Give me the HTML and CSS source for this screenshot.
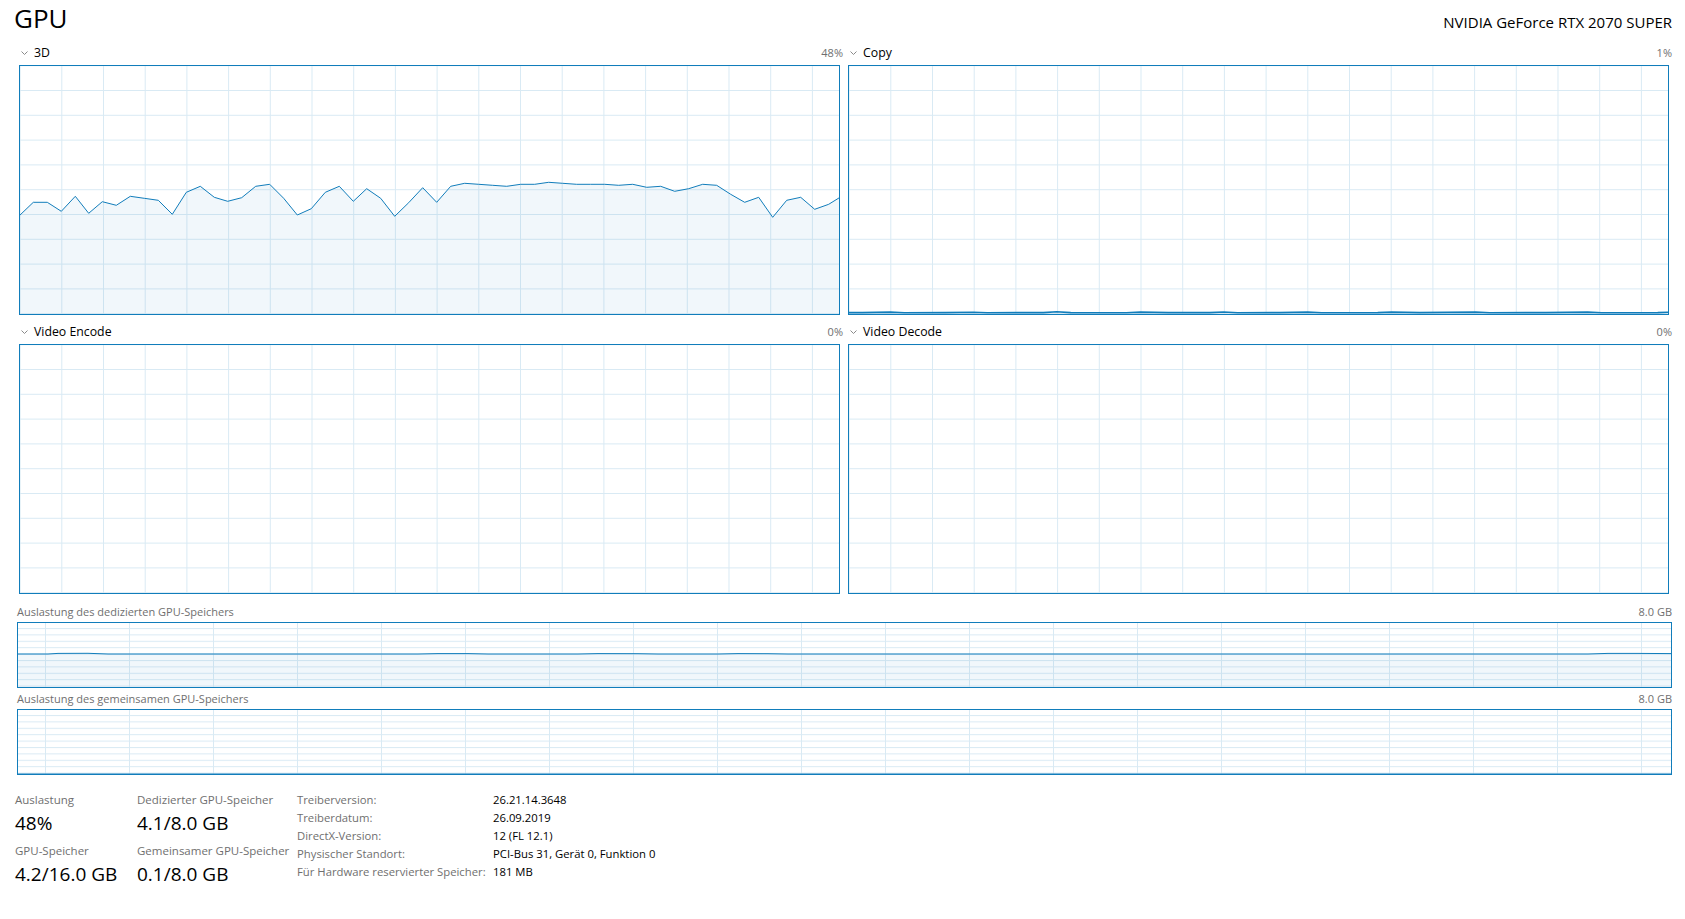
FILE: index.html
```html
<!DOCTYPE html>
<html>
<head>
  <title>GPU</title>
  <link rel="stylesheet" href="styles.css">
</head>
<body>
    <svg class="defs" width="0" height="0">
        <defs>
            <pattern id="grid-engine" patternUnits="userSpaceOnUse" x="41.3" y="24" width="41.7" height="24.8">
                <rect x="0" y="0" width="1" height="24.8" fill="#d9eaf4"/>
                <rect x="0" y="0" width="41.7" height="1" fill="#d9eaf4"/>
            </pattern>
            <pattern id="grid-mem" patternUnits="userSpaceOnUse" x="27" y="5" width="84" height="6.4">
                <rect x="0" y="0" width="1" height="6.4" fill="#d9eaf4"/>
                <rect x="0" y="0" width="84" height="1" fill="#d9eaf4"/>
            </pattern>
        </defs>
    </svg>

    <div class="page">
        <header class="title-bar">
            <h1 class="title">GPU</h1>
            <div class="model">NVIDIA GeForce RTX 2070 SUPER</div>
        </header>

        <div class="engines">
            <section class="engine">
                <div class="engine-head">
                    <svg class="chevron" viewBox="0 0 7 4"><polyline points="0.5,0.5 3.5,3.5 6.5,0.5"/></svg>
                    <span class="engine-name">3D</span>
                    <span class="engine-pct">48%</span>
                </div>
                <div class="graph">
                    <svg viewBox="0 0 819 248" preserveAspectRatio="none">
                        <rect width="819" height="248" fill="url(#grid-engine)"/>
                        <polygon class="area" points="-1,150 13.3,136.3 27.3,136.3 41.3,145.3 55.3,130.3 68.7,147.3 82.3,135.7 96.3,139.3 110.3,130.3 124.3,132.3 138.3,134.3 152.3,148.3 166.3,126.3 180.3,120.3 194.3,131.3 207.7,135.3 221.7,131.7 235.7,120.3 249.7,118.3 263.7,132.3 277.3,149 291.3,142.7 305.3,126.3 319.3,120.3 333.3,135.3 346.7,122.7 360.7,132.3 374.7,150.3 388.7,136.7 402.7,121.7 416.7,136.3 430.7,120.3 444.7,117.3 458.7,118.3 472.7,119.3 486.7,120.3 500.7,118.3 514.7,118.3 528.7,116.3 542.7,117.3 556.7,118.3 570.7,118.3 584.7,118.3 598.7,119.3 612.7,118.3 626.7,121.3 640.7,120.3 654.7,125.3 668.7,122.7 682.7,118.3 696.7,119.3 710.7,128.3 724.7,136.3 738.7,131.3 752.7,151.3 766.7,134.3 780.7,131.3 794.7,143.3 808.7,138.3 820,131.3 820,249 -1,249"/>
                        <polyline class="line" points="-1,150 13.3,136.3 27.3,136.3 41.3,145.3 55.3,130.3 68.7,147.3 82.3,135.7 96.3,139.3 110.3,130.3 124.3,132.3 138.3,134.3 152.3,148.3 166.3,126.3 180.3,120.3 194.3,131.3 207.7,135.3 221.7,131.7 235.7,120.3 249.7,118.3 263.7,132.3 277.3,149 291.3,142.7 305.3,126.3 319.3,120.3 333.3,135.3 346.7,122.7 360.7,132.3 374.7,150.3 388.7,136.7 402.7,121.7 416.7,136.3 430.7,120.3 444.7,117.3 458.7,118.3 472.7,119.3 486.7,120.3 500.7,118.3 514.7,118.3 528.7,116.3 542.7,117.3 556.7,118.3 570.7,118.3 584.7,118.3 598.7,119.3 612.7,118.3 626.7,121.3 640.7,120.3 654.7,125.3 668.7,122.7 682.7,118.3 696.7,119.3 710.7,128.3 724.7,136.3 738.7,131.3 752.7,151.3 766.7,134.3 780.7,131.3 794.7,143.3 808.7,138.3 820,131.3"/>
                    </svg>
                </div>
            </section>

            <section class="engine">
                <div class="engine-head">
                    <svg class="chevron" viewBox="0 0 7 4"><polyline points="0.5,0.5 3.5,3.5 6.5,0.5"/></svg>
                    <span class="engine-name">Copy</span>
                    <span class="engine-pct">1%</span>
                </div>
                <div class="graph">
                    <svg viewBox="0 0 819 248" preserveAspectRatio="none">
                        <rect width="819" height="248" fill="url(#grid-engine)"/>
                        <polygon class="area" points="-1,246.6 13.3,246.6 41.3,246.1 55.3,246.7 96.3,246.6 124.3,246.2 138.3,246.7 194.3,246.6 207.7,245.8 221.7,246.6 277.3,246.7 291.3,246.1 319.3,246.6 360.7,246.6 374.7,246 388.7,246.7 430.7,246.6 458.7,246.1 472.7,246.7 528.7,246.6 542.7,246.1 570.7,246.6 626.7,246.1 640.7,246.7 696.7,246.6 738.7,246.1 752.7,246.7 808.7,246.6 820,246.2 820,249 -1,249"/>
                        <polyline class="line thick" points="-1,246.6 13.3,246.6 41.3,246.1 55.3,246.7 96.3,246.6 124.3,246.2 138.3,246.7 194.3,246.6 207.7,245.8 221.7,246.6 277.3,246.7 291.3,246.1 319.3,246.6 360.7,246.6 374.7,246 388.7,246.7 430.7,246.6 458.7,246.1 472.7,246.7 528.7,246.6 542.7,246.1 570.7,246.6 626.7,246.1 640.7,246.7 696.7,246.6 738.7,246.1 752.7,246.7 808.7,246.6 820,246.2"/>
                    </svg>
                </div>
            </section>

            <section class="engine">
                <div class="engine-head">
                    <svg class="chevron" viewBox="0 0 7 4"><polyline points="0.5,0.5 3.5,3.5 6.5,0.5"/></svg>
                    <span class="engine-name">Video Encode</span>
                    <span class="engine-pct">0%</span>
                </div>
                <div class="graph">
                    <svg viewBox="0 0 819 248" preserveAspectRatio="none">
                        <rect width="819" height="248" fill="url(#grid-engine)"/>
                    </svg>
                </div>
            </section>

            <section class="engine">
                <div class="engine-head">
                    <svg class="chevron" viewBox="0 0 7 4"><polyline points="0.5,0.5 3.5,3.5 6.5,0.5"/></svg>
                    <span class="engine-name">Video Decode</span>
                    <span class="engine-pct">0%</span>
                </div>
                <div class="graph">
                    <svg viewBox="0 0 819 248" preserveAspectRatio="none">
                        <rect width="819" height="248" fill="url(#grid-engine)"/>
                    </svg>
                </div>
            </section>
        </div>

        <section class="mem">
            <div class="mem-head">
                <span>Auslastung des dedizierten GPU-Speichers</span>
                <span>8.0 GB</span>
            </div>
            <div class="mem-graph">
                <svg viewBox="0 0 1653 64" preserveAspectRatio="none">
                    <rect width="1653" height="64" fill="url(#grid-mem)"/>
                    <polygon class="area" points="-1,31 30,31 40,30.4 70,30.3 90,31 400,31 420,30.6 450,30.6 470,31 560,31 580,30.6 620,30.7 640,31 700,31 720,30.6 750,30.7 770,31 1570,31 1590,30.4 1620,30.4 1654,30.6 1654,65 -1,65"/>
                    <polyline class="line" points="-1,31 30,31 40,30.4 70,30.3 90,31 400,31 420,30.6 450,30.6 470,31 560,31 580,30.6 620,30.7 640,31 700,31 720,30.6 750,30.7 770,31 1570,31 1590,30.4 1620,30.4 1654,30.6"/>
                </svg>
            </div>

            <div class="mem-head second">
                <span>Auslastung des gemeinsamen GPU-Speichers</span>
                <span>8.0 GB</span>
            </div>
            <div class="mem-graph">
                <svg viewBox="0 0 1653 64" preserveAspectRatio="none">
                    <rect width="1653" height="64" fill="url(#grid-mem)"/>
                    <polyline class="line faint" points="-1,63.5 1654,63.5"/>
                </svg>
            </div>
        </section>

        <div class="stats">
            <div class="stat-col first">
                <div class="stat-label">Auslastung</div>
                <div class="stat-value">48%</div>
                <div class="stat-label lower">GPU-Speicher</div>
                <div class="stat-value">4.2/16.0 GB</div>
            </div>
            <div class="stat-col second">
                <div class="stat-label">Dedizierter GPU-Speicher</div>
                <div class="stat-value">4.1/8.0 GB</div>
                <div class="stat-label lower">Gemeinsamer GPU-Speicher</div>
                <div class="stat-value">0.1/8.0 GB</div>
            </div>
            <div class="details">
                <span class="detail-key">Treiberversion:</span><span class="detail-val">26.21.14.3648</span>
                <span class="detail-key">Treiberdatum:</span><span class="detail-val">26.09.2019</span>
                <span class="detail-key">DirectX-Version:</span><span class="detail-val">12 (FL 12.1)</span>
                <span class="detail-key">Physischer Standort:</span><span class="detail-val">PCI-Bus 31, Gerät 0, Funktion 0</span>
                <span class="detail-key">Für Hardware reservierter Speicher:</span><span class="detail-val">181 MB</span>
            </div>
        </div>
    </div>
</body>
</html>
```

FILE: styles.css
```css
:root {
    --gpu-blue: #117dbb;
    --grid-color: #d9eaf4;
    --label-color: #6f6f6f;
    --text-color: #000;
}

body {
    margin: 0;
    background-color: #fff;
    color: var(--text-color);
    font-family: "Open Sans", "Noto Sans", sans-serif;
}

.defs {
    position: absolute;
}

.page {
    width: 1685px;
    box-sizing: border-box;
    padding: 0 16px 0 19px;
}

/* header */
.title-bar {
    display: flex;
    justify-content: space-between;
    align-items: baseline;
    height: 44px;
    margin: 0 -3px 0 -5px;
}

.title {
    margin: 0;
    font-size: 26px;
    line-height: 36px;
    font-weight: 400;
}

.model {
    font-size: 15px;
}

/* engine graphs */
.engines {
    display: grid;
    grid-template-columns: 1fr 1fr;
    column-gap: 8px;
    row-gap: 8px;
}

.engine-head {
    display: flex;
    align-items: center;
    height: 16px;
    margin: 0 -3px 5px 0;
    font-size: 12px;
}

.chevron {
    width: 7px;
    height: 4px;
    margin: 1px 6px 0 2px;
    fill: none;
    stroke: #8a8a8a;
    stroke-width: 1;
}

.engine-name {
    font-size: 12.3px;
}

.engine-pct {
    margin-left: auto;
    font-size: 11px;
    color: var(--label-color);
}

.graph {
    height: 248px;
    border: 1px solid var(--gpu-blue);
}

.graph svg,
.mem-graph svg {
    display: block;
    width: 100%;
    height: 100%;
}

.area {
    fill: rgba(17, 125, 187, 0.06);
    stroke: none;
}

.line {
    fill: none;
    stroke: var(--gpu-blue);
    stroke-width: 1;
    stroke-linejoin: round;
}

.line.thick {
    stroke-width: 1.6;
}

.line.faint {
    stroke-opacity: 0.5;
}

/* memory graphs */
.mem {
    margin: 11px -3px 0 -2px;
}

.mem-head {
    display: flex;
    justify-content: space-between;
    font-size: 11px;
    line-height: 14px;
    color: var(--label-color);
    margin-bottom: 3px;
}

.mem-head.second {
    margin-top: 4px;
}

.mem-graph {
    height: 64px;
    border: 1px solid var(--gpu-blue);
}

/* bottom stats */
.stats {
    display: flex;
    margin: 17px 0 0 -4px;
}

.stat-col {
    flex-shrink: 0;
}

.stat-col.first {
    width: 122px;
}

.stat-col.second {
    width: 160px;
}

.stat-label {
    font-size: 11.5px;
    line-height: 16px;
    color: var(--label-color);
    white-space: nowrap;
}

.stat-label.lower {
    margin-top: 8px;
}

.stat-value {
    font-size: 19px;
    line-height: 24px;
    margin-top: 3px;
    white-space: nowrap;
}

.details {
    display: grid;
    grid-template-columns: 196px auto;
    grid-auto-rows: 18px;
    font-size: 11.3px;
    line-height: 18px;
    margin-top: -1px;
    white-space: nowrap;
}

.detail-key {
    color: var(--label-color);
}
```
